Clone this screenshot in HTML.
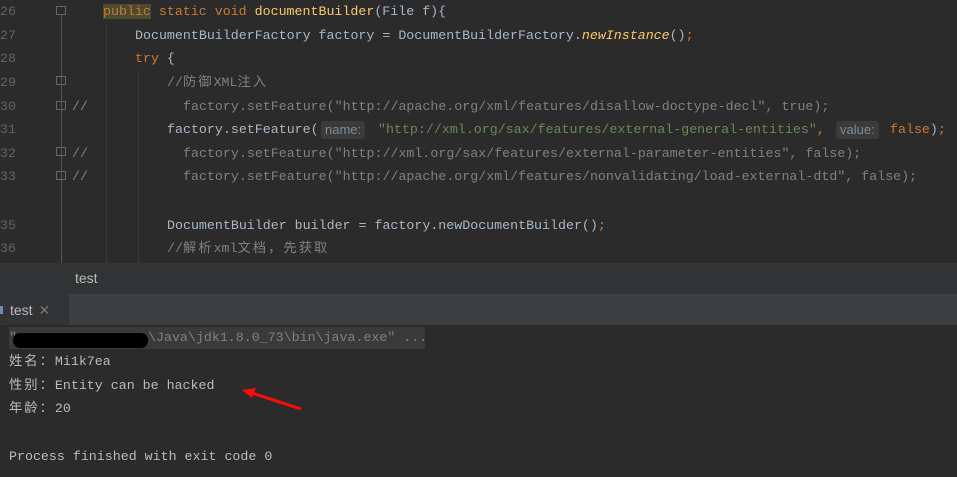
<!DOCTYPE html>
<html><head><meta charset="utf-8"><style>
body{margin:0;width:957px;height:477px;background:#2b2b2b;overflow:hidden;position:relative;font-family:"Liberation Mono","Noto Sans CJK SC",monospace;font-size:13.3px;color:#a9b7c6}
.l{position:absolute;white-space:pre;height:22px;line-height:22px}
.n{position:absolute;left:0;width:14px;color:#606366;white-space:pre;line-height:22px;text-align:right}
.k{color:#cc7832}.m{color:#ffc66d}.c{color:#808080}.s{color:#6a8759}.i{font-style:italic;color:#ffc66d}
.z{letter-spacing:2px}
.h{position:absolute;background:#3b3b3b;color:#7f8b95;font-family:"Liberation Sans",sans-serif;font-size:13px;border-radius:3px;height:18px;line-height:18px;padding:0 4px}
.f{position:absolute;left:56px;width:10px;height:9px;border:1px solid #666;box-sizing:border-box}
.ui{font-family:"Liberation Sans",sans-serif;font-size:14px;color:#bbbbbb}
</style></head><body>
<div class="n" style="top:1px">26</div><div class="n" style="top:25px">27</div><div class="n" style="top:48px">28</div><div class="n" style="top:72px">29</div><div class="n" style="top:96px">30</div><div class="n" style="top:119px">31</div><div class="n" style="top:143px">32</div><div class="n" style="top:166px">33</div><div class="n" style="top:215px">35</div><div class="n" style="top:238px">36</div>
<div class="f" style="top:6px"></div><div class="f" style="top:76px"></div><div class="f" style="top:101px"></div><div class="f" style="top:147px"></div><div class="f" style="top:171px"></div>
<div style="position:absolute;left:61px;top:15px;width:1px;height:248px;background:#555"></div>
<div style="position:absolute;left:106px;top:24px;width:1px;height:240px;background:#3a3a3a"></div>
<div style="position:absolute;left:138px;top:70px;width:1px;height:194px;background:#3a3a3a"></div>
<div class="l" style="top:1px;left:103px"><span class="k" style="background:#4e4a32">public</span><span class="k"> static void </span><span class="m">documentBuilder</span>(File f){</div>
<div class="l" style="top:25px;left:135px">DocumentBuilderFactory factory = DocumentBuilderFactory.<span class="i">newInstance</span>()<span class="k">;</span></div>
<div class="l" style="top:48px;left:135px"><span class="k">try</span> {</div>
<div class="l c" style="top:72px;left:167px">//<span class="z">防御</span>XML<span class="z">注入</span></div>
<div class="l c" style="top:96px;left:72px">//</div><div class="l c" style="top:96px;left:183px">factory.setFeature("http://apache.org/xml/features/disallow-doctype-decl", true);</div>
<div class="l" style="top:119px;left:167px">factory.setFeature(</div>
<div class="h" style="top:121px;left:321px">name:</div>
<div class="l s" style="top:119px;left:378px">"http://xml.org/sax/features/external-general-entities"<span class="k">,</span></div>
<div class="h" style="top:121px;left:836px">value:</div>
<div class="l" style="top:119px;left:890px"><span class="k">false</span>)<span class="k">;</span></div>
<div class="l c" style="top:143px;left:72px">//</div><div class="l c" style="top:143px;left:183px">factory.setFeature("http://xml.org/sax/features/external-parameter-entities", false);</div>
<div class="l c" style="top:166px;left:72px">//</div><div class="l c" style="top:166px;left:183px">factory.setFeature("http://apache.org/xml/features/nonvalidating/load-external-dtd", false);</div>
<div class="l" style="top:215px;left:167px">DocumentBuilder builder = factory.newDocumentBuilder()<span class="k">;</span></div>
<div class="l c" style="top:238px;left:167px">//<span class="z">解析</span>xml<span class="z">文档，先获取</span></div>
<div style="position:absolute;left:0;top:263px;width:957px;height:31px;background:#313335"></div>
<div class="ui" style="position:absolute;left:75px;top:270px">test</div>
<div style="position:absolute;left:0;top:294px;width:957px;height:31px;background:#3c3f41"></div>
<div style="position:absolute;left:0;top:294px;width:69px;height:31px;background:#313335"></div>
<div style="position:absolute;left:0;top:306px;width:3px;height:8px;background:#6a8fb0"></div>
<div class="ui" style="position:absolute;left:10px;top:302px">test <span style="color:#777;margin-left:2px">✕</span></div>
<div style="position:absolute;left:9px;top:327px;width:416px;height:22px;background:#3a3a3a"></div>
<div class="l c" style="top:327px;left:9px">"</div>
<div style="position:absolute;left:13px;top:333px;width:135px;height:15px;background:#000;border-radius:7px"></div>
<div class="l c" style="top:327px;left:148px">\Java\jdk1.8.0_73\bin\java.exe" ...</div>
<div class="l" style="top:351px;left:9px;color:#bbb"><span class="z">姓名：</span>Mi1k7ea</div>
<div class="l" style="top:375px;left:9px;color:#bbb"><span class="z">性别：</span>Entity can be hacked</div>
<div class="l" style="top:398px;left:9px;color:#bbb"><span class="z">年龄：</span>20</div>
<div class="l" style="top:446px;left:9px;color:#bbb">Process finished with exit code 0</div>
<svg style="position:absolute;left:0;top:0" width="957" height="477"><line x1="301" y1="409" x2="252" y2="393" stroke="#ff0a0a" stroke-width="3"/><polygon points="242,390 256,388 252,398" fill="#ff0a0a"/></svg>
</body></html>
